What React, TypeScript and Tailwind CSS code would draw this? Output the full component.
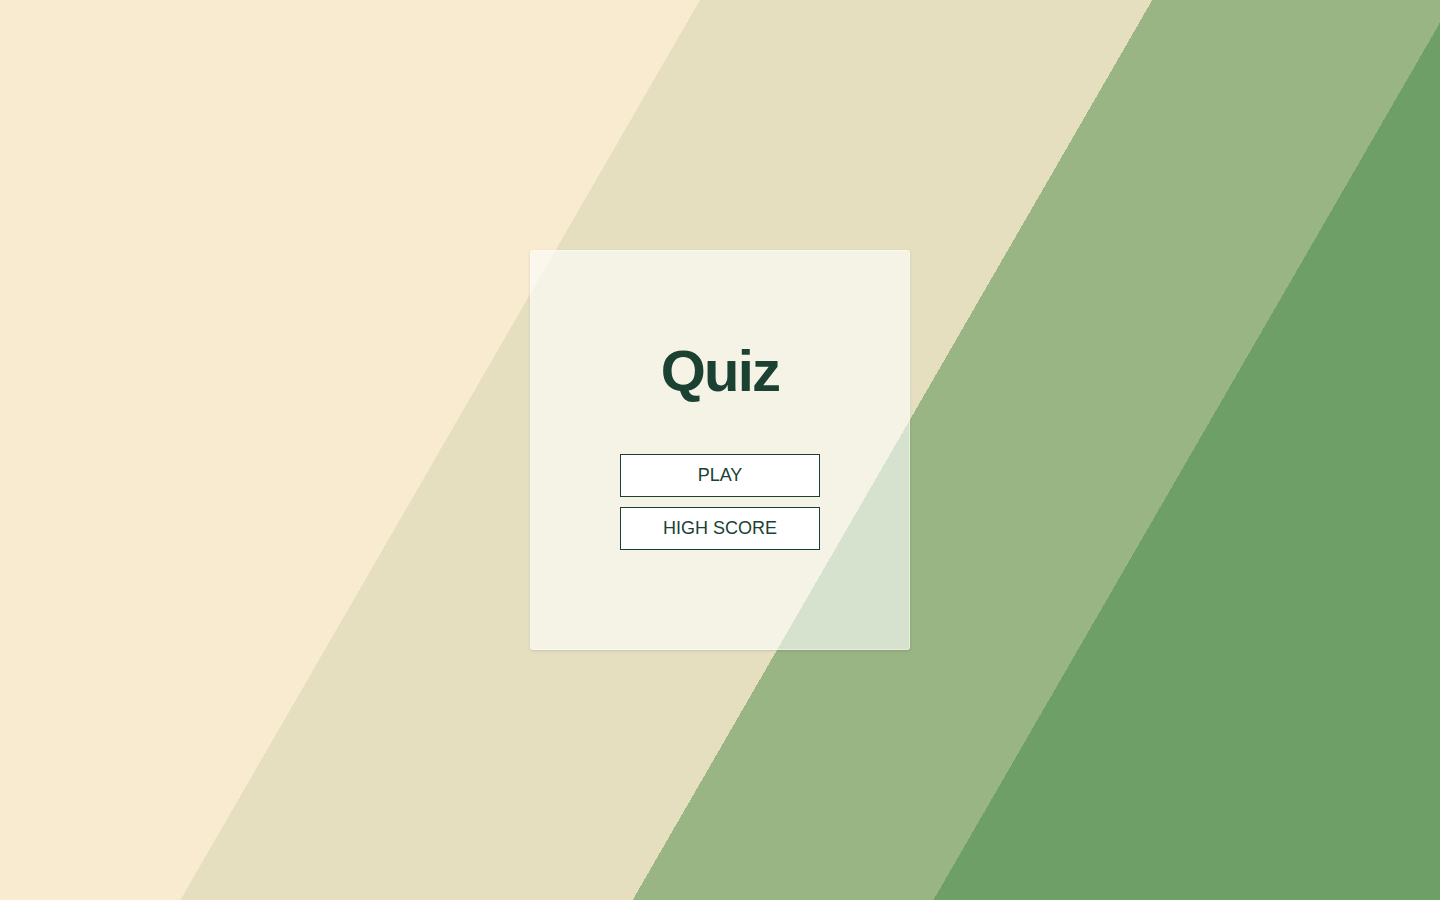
export default function App() {
  return (
    <main className="h-screen w-full flex items-center justify-center bg-[linear-gradient(120deg,#f8ebd0_35.72%,#e5dfc0_35.72%,#e5dfc0_58.8%,#9ab584_58.8%,#9ab584_74.15%,#6e9f67_74.15%)] font-['Liberation_Sans',Arial,sans-serif]">
      <div className="w-[380px] h-[400px] flex flex-col items-center bg-white/60 rounded-[3px] border border-white/40 shadow-[0_1px_3px_rgba(0,0,0,0.12)]">
        <h1 className="mt-[91px] text-[58px] font-bold leading-none tracking-[-0.03em] text-[#1b4132]">
          Quiz
        </h1>

        <div className="mt-[54px] flex flex-col gap-[10px]">
          <button className="w-[200px] h-[43px] bg-white border border-[#1b4132] text-[18px] text-[#1b4132]">
            PLAY
          </button>
          <button className="w-[200px] h-[43px] bg-white border border-[#1b4132] text-[18px] text-[#1b4132]">
            HIGH SCORE
          </button>
        </div>
      </div>
    </main>
  );
}
